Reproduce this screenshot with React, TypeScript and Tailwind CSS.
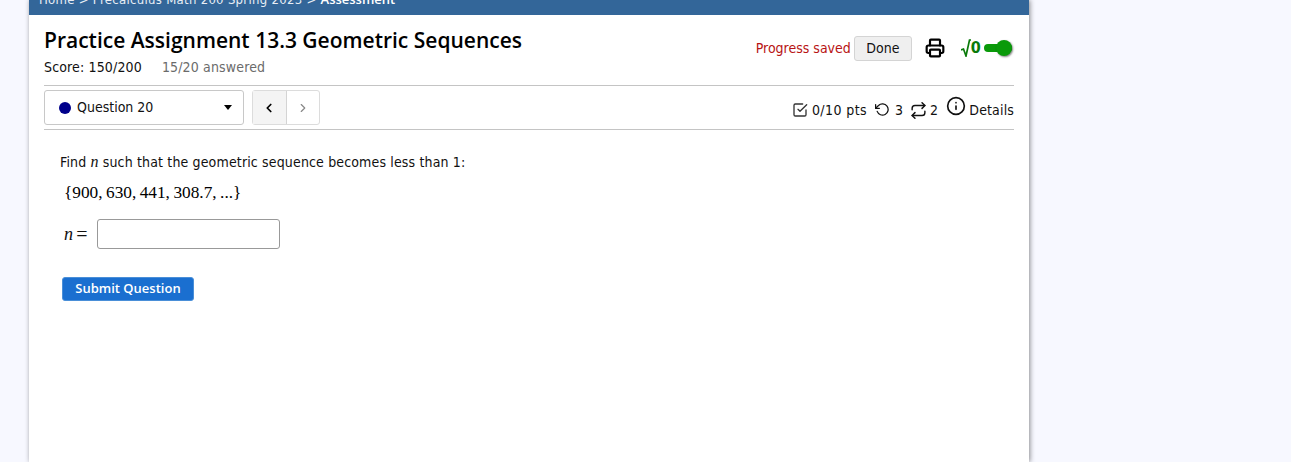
import React from "react";
import { LuPrinter, LuChevronLeft, LuChevronRight } from "react-icons/lu";
import { FiInfo, FiCheckSquare, FiRotateCcw, FiRepeat } from "react-icons/fi";

const App = () => {
  return (
    <div className="h-[462px] w-full overflow-hidden bg-[#f7f8ff] font-['DejaVu_Sans_Condensed','DejaVu_Sans',sans-serif] text-[14px] tracking-[0.15px] text-[#111]">
      <div className="ml-[29px] h-full w-[1000px] bg-white shadow-[1px_0_5px_rgba(0,0,0,0.45)]">
        <div className="h-[15px] overflow-hidden bg-[#336699] pl-[10px] text-[13px] leading-[18px] tracking-[0.3px] text-[#e8eef5]">
          <div className="-mt-[10px] whitespace-nowrap">
            Home &gt; Precalculus Math 200 Spring 2023 &gt; <b className="font-['Open_Sans',sans-serif] font-semibold tracking-normal text-white">Assessment</b>
          </div>
        </div>
        <div className="px-[15px]">
          <div className="flex h-[71px] justify-between border-b border-[#c4c4c4]">
            <div className="pt-[11px]">
              <h1 className="font-['Open_Sans',sans-serif] text-[21px] leading-[28px] font-semibold tracking-normal text-black">Practice Assignment 13.3 Geometric Sequences</h1>
              <div className="mt-[4px] flex gap-[20px] leading-[18px]">
                <span>Score: 150/200</span>
                <span className="text-[#6b6b6b]">15/20 answered</span>
              </div>
            </div>
            <div className="flex h-[66px] items-center">
              <span className="tracking-normal text-[#b81414]">Progress saved</span>
              <button className="ml-[3px] h-[25px] w-[58px] rounded-[3px] border border-[#d4d4d4] bg-[#efefef] tracking-normal">Done</button>
              <LuPrinter className="ml-[13px] text-[20px] text-black" strokeWidth={2.6} />
              <span className="ml-[16px] flex items-center text-[#0a7a0a]">
                <svg width="10" height="18" viewBox="0 0 10 18" fill="none" stroke="currentColor" strokeWidth="1.7">
                  <path d="M0 11 L2.5 10 L5 17 L8.5 1 L10 1" />
                </svg>
                <span className="text-[16px] leading-[18px] font-bold">0</span>
              </span>
              <div className="relative ml-[3px] mr-[2px] h-[8px] w-[28px] rounded-full bg-[#0a9a0a]">
                <div className="absolute top-[-4px] right-0 h-[16px] w-[16px] rounded-full bg-[#0a9a0a] shadow-[1px_1px_2px_rgba(0,0,0,0.5)]"></div>
              </div>
            </div>
          </div>
          <div className="flex h-[44px] items-center justify-between border-b border-[#c4c4c4]">
            <div className="flex items-center">
              <div className="flex h-[35px] w-[200px] items-center rounded-[3px] border border-[#c8c8c8] pr-[11px] pl-[14px] tracking-normal">
                <span className="mr-[6px] h-[12px] w-[12px] rounded-full bg-[#00008b]"></span>
                Question 20
                <span className="ml-auto h-0 w-0 border-x-[4px] border-t-[5px] border-x-transparent border-t-black"></span>
              </div>
              <div className="ml-[8px] flex h-[35px] w-[68px] rounded-[3px] border border-[#dcdcdc]">
                <div className="flex flex-1 items-center justify-center border-r border-[#d4d4d4] bg-[#f4f4f4] text-[14px] text-black"><LuChevronLeft strokeWidth={3} /></div>
                <div className="flex flex-1 items-center justify-center text-[14px] text-[#888]"><LuChevronRight /></div>
              </div>
            </div>
            <div className="flex items-center pt-[5px]">
              <FiCheckSquare className="text-[16px] text-[#333]" />
              <span className="ml-[4px] tracking-[0.4px]">0/10 pts</span>
              <FiRotateCcw className="ml-[8px] -translate-y-[1px] text-[15px]" />
              <span className="ml-[5px]">3</span>
              <FiRepeat className="ml-[7px] text-[17px]" />
              <span className="ml-[3px]">2</span>
              <FiInfo className="ml-[8px] -translate-y-[4px] text-[20px]" />
              <span className="ml-[3px]">Details</span>
            </div>
          </div>
          <div className="pt-[22px] pl-[16px]">
            <p className="leading-[20px]">
              Find <i className="font-['Liberation_Serif',serif] text-[16px]">n</i> such that the geometric sequence becomes less than 1:
            </p>
            <div className="mt-[10px] pl-[4px] font-['Liberation_Serif',serif] text-[17.3px] leading-[22px] tracking-normal text-black">{"{900,\u2009630,\u2009441,\u2009308.7,\u2009...}"}</div>
            <div className="mt-[15px] flex items-center pl-[4px]">
              <span className="flex w-[33px] items-center font-['Liberation_Serif',serif] text-[18px]"><i>n</i><span className="ml-[3px] text-[20px]">=</span></span>
              <input className="h-[30px] w-[183px] rounded-[3px] border border-[#999] bg-white" />
            </div>
            <button className="mt-[28px] ml-[2px] block h-[24px] w-[132px] rounded-[3px] border border-[#4a8fd8] bg-[#1a6fd0] font-['Open_Sans',sans-serif] text-[13px] font-semibold tracking-normal text-white">Submit Question</button>
          </div>
        </div>
      </div>
    </div>
  );
};

export default App;
